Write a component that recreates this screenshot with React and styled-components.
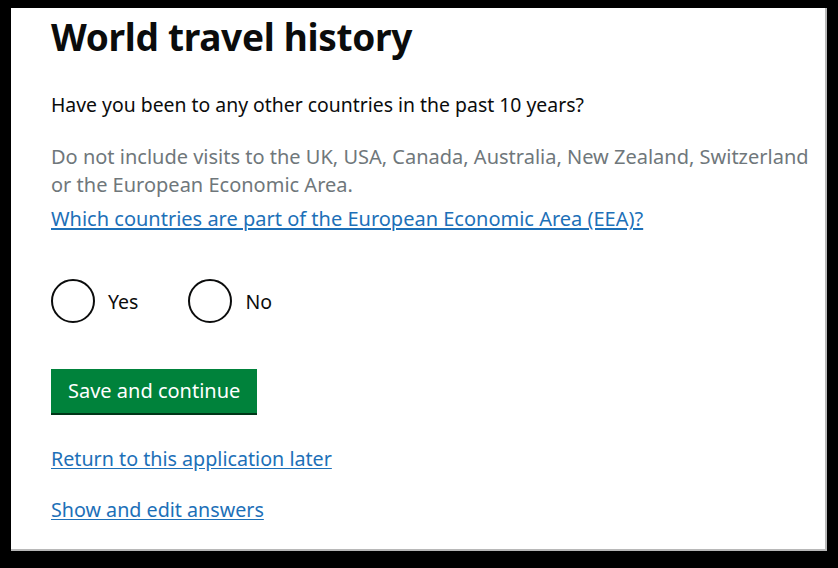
import React from "react";
import styled, { createGlobalStyle } from "styled-components";

const Global = createGlobalStyle`
  html, body { margin: 0; padding: 0; background: #000; }
  body { font-family: "Noto Sans", Arial, sans-serif; color: #0b0c0c; }
`;

const Page = styled.div`
  width: 838px;
  height: 568px;
  padding: 8px 0 0 11px;
  box-sizing: border-box;
`;

const Card = styled.main`
  width: 816px;
  height: 543px;
  box-sizing: border-box;
  background: #fff;
  border-right: 2px solid #b8b8b8;
  border-bottom: 2px solid #b8b8b8;
  padding: 7px 10px 0 40px;
  display: flex;
  flex-direction: column;
  align-items: flex-start;
`;

const Title = styled.h1`
  margin: 0;
  font-size: 37px;
  line-height: 44px;
  font-weight: 700;
  letter-spacing: -0.3px;
`;

const Question = styled.p`
  margin: 32px 0 0;
  font-size: 19.4px;
  line-height: 28px;
`;

const Hint = styled.p`
  margin: 24px 0 0;
  font-size: 20px;
  line-height: 28px;
  color: #6f777b;
  white-space: nowrap;
`;

const Link = styled.a`
  font-size: ${(p) => p.$size || 20}px;
  line-height: 28px;
  color: #1d70b8;
  text-decoration: underline;
  text-underline-offset: 2px;
  cursor: pointer;
`;

const HintLink = styled(Link)`
  margin-top: 6px;
`;

const Radios = styled.div`
  display: flex;
  gap: 50px;
  margin-top: 46px;
`;

const RadioItem = styled.label`
  display: flex;
  align-items: center;
  gap: 13px;
  font-size: 19.5px;
  cursor: pointer;
`;

const Circle = styled.span`
  width: 40px;
  height: 40px;
  border: 2px solid #0b0c0c;
  border-radius: 50%;
`;

const Button = styled.button`
  margin-top: 46px;
  background: #00823b;
  color: #fff;
  border: 0;
  box-shadow: 0 2px 0 #003618;
  font-family: inherit;
  font-size: 20px;
  line-height: 24px;
  padding: 10px 17px 10px;
  cursor: pointer;
`;

const BottomLink = styled(Link)`
  margin-top: ${(p) => p.$gap}px;
`;

export default function App() {
  return (
    <>
      <Global />
      <Page>
        <Card>
          <Title>World travel history</Title>
          <Question>Have you been to any other countries in the past 10 years?</Question>
          <Hint>
            Do not include visits to the UK, USA, Canada, Australia, New Zealand, Switzerland
            <br />
            or the European Economic Area.
          </Hint>
          <HintLink>Which countries are part of the European Economic Area (EEA)?</HintLink>
          <Radios>
            <RadioItem>
              <Circle />
              Yes
            </RadioItem>
            <RadioItem>
              <Circle />
              No
            </RadioItem>
          </Radios>
          <Button>Save and continue</Button>
          <BottomLink $gap={32} $size={19.7}>Return to this application later</BottomLink>
          <BottomLink $gap={23} $size={19.7}>Show and edit answers</BottomLink>
        </Card>
      </Page>
    </>
  );
}
